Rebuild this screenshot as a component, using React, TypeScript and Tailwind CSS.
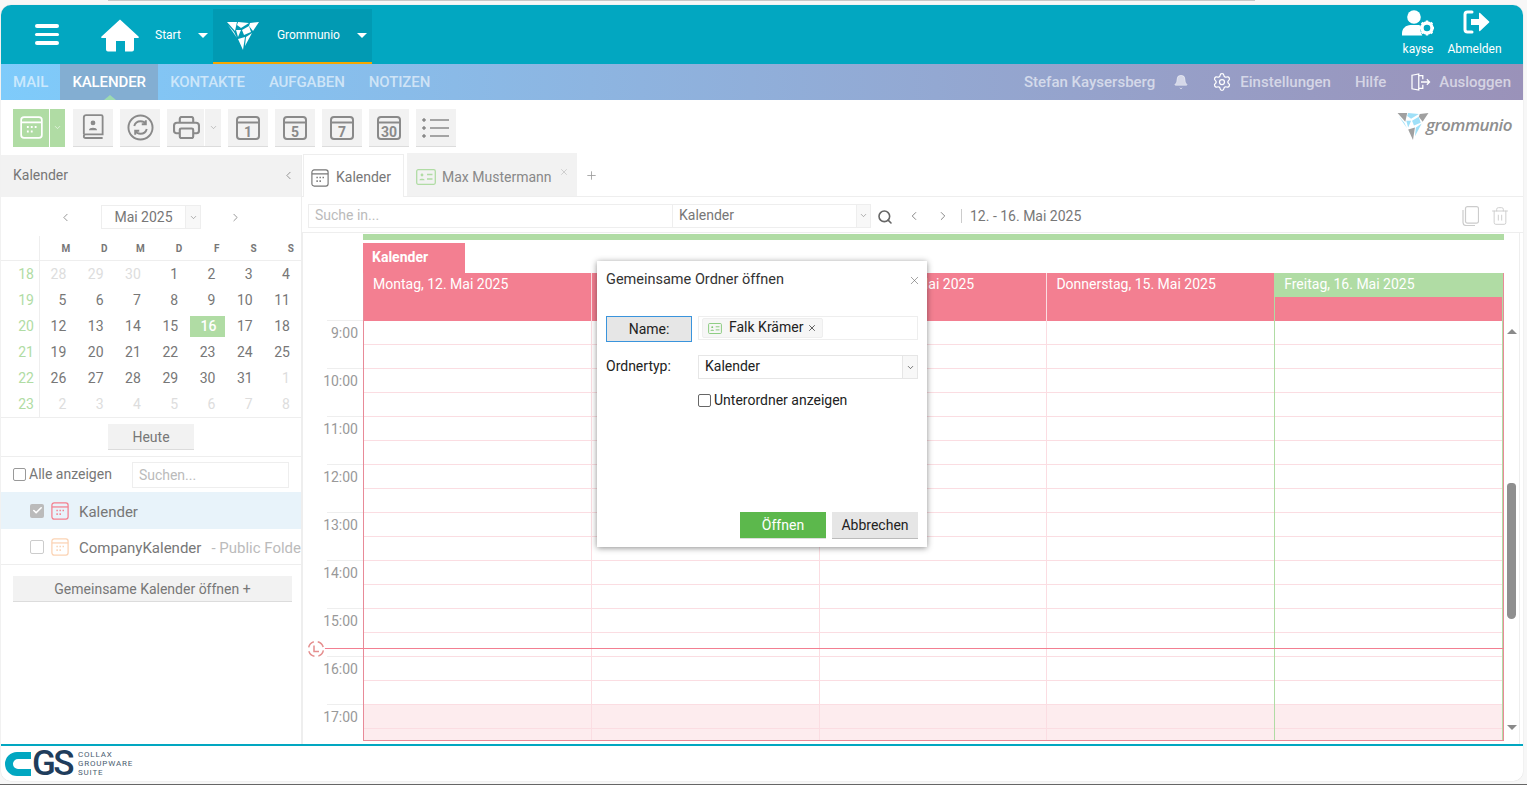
import { Bell, ChevronDown, ChevronLeft, ChevronRight, Plus, Search, Settings, Trash2, X, Check } from "lucide-react";

const NAV_LEFT = ["KONTAKTE", "AUFGABEN", "NOTIZEN"];
const HOURS = ["9:00", "10:00", "11:00", "12:00", "13:00", "14:00", "15:00", "16:00", "17:00"];
const WEEKDAYS = ["M", "D", "M", "D", "F", "S", "S"];
const WEEKS = [
  { nr: 18, days: [28, 29, 30, 1, 2, 3, 4] },
  { nr: 19, days: [5, 6, 7, 8, 9, 10, 11] },
  { nr: 20, days: [12, 13, 14, 15, 16, 17, 18] },
  { nr: 21, days: [19, 20, 21, 22, 23, 24, 25] },
  { nr: 22, days: [26, 27, 28, 29, 30, 31, 1] },
  { nr: 23, days: [2, 3, 4, 5, 6, 7, 8] },
];
const DAYS = ["Montag, 12. Mai 2025", "Dienstag, 13. Mai 2025", "Mittwoch, 14. Mai 2025", "Donnerstag, 15. Mai 2025", "Freitag, 16. Mai 2025"];

function Shards({ a, b, className }: { a: string; b: string; className?: string }) {
  return (
    <svg viewBox="0 0 32 28" className={className}>
      <polygon points="0,0 10,0 8,9" fill={a} />
      <polygon points="11,0 22,1 14,6 10,3" fill={b} />
      <polygon points="23,1 32,0 26,9 22,4" fill={a} />
      <polygon points="1,3 7,10 10,16" fill={b} />
      <polygon points="9,8 14,8 11,15" fill={b} />
      <polygon points="15,8 22,4 24,10 17,13" fill={b} />
      <polygon points="11,17 18,15 16,28" fill={a} />
      <polygon points="19,15 25,11 18,24" fill={b} />
    </svg>
  );
}

function CalIcon({ label, className }: { label: string; className?: string }) {
  return (
    <svg viewBox="0 0 26 26" className={className} fill="none" stroke="#8a8a8a" strokeWidth="2">
      <rect x="2" y="2" width="22" height="22" rx="3" />
      <path d="M2 7.500h22" />
      <text x="13" y="22" textAnchor="middle" fontSize="14" fontWeight="700" fill="#8a8a8a" stroke="none" fontFamily="Roboto, sans-serif">
        {label}
      </text>
    </svg>
  );
}

function GridCal({ color, className, width = 2 }: { color: string; className?: string; width?: number }) {
  return (
    <svg viewBox="0 0 20 20" className={className} fill="none" stroke={color} strokeWidth={width}>
      <rect x="1" y="1" width="18" height="18" rx="2.500" />
      <path d="M1 5.500h18" />
      <path d="M6 9.500h1.600M9.400 9.500H11M12.800 9.500h1.600M6 13.500h1.600M9.400 13.500H11" strokeWidth="1.800" />
    </svg>
  );
}

function ContactCard({ color, className }: { color: string; className?: string }) {
  return (
    <svg viewBox="0 0 20 16" className={className} fill="none" stroke={color} strokeWidth="1.300">
      <rect x="0.700" y="0.700" width="18.600" height="14.600" rx="1.500" />
      <circle cx="6" cy="6" r="1.400" fill={color} stroke="none" />
      <path d="M3.400 11.200c0-1.800 5.200-1.800 5.200 0z" fill={color} stroke="none" />
      <path d="M11 5.500h5.500M11 10h5.500" />
    </svg>
  );
}

function ToolButton({ children, w = "w-[40px]" }: { children: React.ReactNode; w?: string }) {
  return <div className={`${w} h-[38px] bg-[#f2f2f2] border-b border-[#dcdcdc] flex items-center justify-center`}>{children}</div>;
}

function Caret({ className }: { className?: string }) {
  return <span className={`w-0 h-0 border-x-[5px] border-x-transparent border-t-[5px] border-t-white ${className ?? ""}`} />;
}

function Sidebar() {
  return (
    <aside className="w-[301px] shrink-0 flex flex-col border-r border-[#eeeeee] text-[#777777]">
      <div className="h-[42px] bg-[#f2f2f2] flex items-center justify-between pl-3 pr-[6px] pb-[2px] text-[14px]">
        <span>Kalender</span>
        <ChevronLeft size={13} strokeWidth={1.4} />
      </div>

      <div className="h-[39px] flex items-center pl-[58px] pt-[1px]">
        <ChevronLeft size={13} strokeWidth={1.4} />
        <div className="ml-[29px] w-[100px] h-[24px] border border-[#eeeeee] flex text-[14px]">
          <span className="flex-1 text-center leading-[22px]">Mai 2025</span>
          <span className="w-[15px] bg-[#f8f8f8] border-l border-[#eeeeee] flex items-center justify-center">
            <ChevronDown size={9} strokeWidth={1.5} />
          </span>
        </div>
        <ChevronRight size={13} strokeWidth={1.4} className="ml-[28px]" />
      </div>

      <div className="flex h-[25px] border-b border-[#eeeeee]">
        <div className="w-[39px] border-r border-[#eeeeee]" />
        <div className="flex-1 grid grid-cols-7 text-[10px] font-bold leading-[25px] text-right">
          {WEEKDAYS.map((d, i) => (
            <span key={i} className="pr-[7px]">{d}</span>
          ))}
        </div>
      </div>

      <div className="border-b border-[#eeeeee]">
        {WEEKS.map((w, wi) => (
          <div key={w.nr} className="flex h-[26px] text-[14px] leading-[26px]">
            <div className="w-[39px] border-r border-[#eeeeee] text-right pr-[5px] text-[#b0dca4]">{w.nr}</div>
            <div className="flex-1 grid grid-cols-7 text-right">
              {w.days.map((d, i) => {
                const muted = (wi === 0 && i < 3) || (wi === 4 && i === 6) || wi === 5;
                const today = d === 16;
                return (
                  <span key={i} className="pr-[11px] relative">
                    {today ? (
                      <span className="absolute left-[1px] right-[1px] top-[3px] h-[21px] bg-[#b0dca4] text-white pr-[9px] leading-[21px] font-medium">{d}</span>
                    ) : (
                      <span className={muted ? "text-[#dddddd]" : ""}>{d}</span>
                    )}
                  </span>
                );
              })}
            </div>
          </div>
        ))}
      </div>

      <div className="h-[39px] pt-[6px] pl-[107px] border-b border-[#eeeeee]">
        <div className="w-[86px] h-[26px] bg-[#f2f2f2] border-b border-[#dcdcdc] text-center text-[14px] leading-[27px]">Heute</div>
      </div>

      <div className="h-[35px] flex items-center pl-3 text-[14px]">
        <span className="w-[13px] h-[13px] border border-[#999999] rounded-[2px] mr-[3px]" />
        <span>Alle anzeigen</span>
        <div className="ml-[20px] w-[157px] h-[26px] border border-[#eeeeee] pl-[6px] leading-[25px] text-[#bbbbbb]">Suchen...</div>
      </div>

      <div className="h-[37px] bg-[#e8f3fa] flex items-center pl-[29px] text-[15px]">
        <span className="w-[14px] h-[14px] bg-[#bbbbbb] rounded-[2px] flex items-center justify-center">
          <Check size={11} strokeWidth={3.5} color="#ffffff" />
        </span>
        <GridCal color="#f3808f" className="w-[18px] h-[18px] ml-[7px]" width={1.4} />
        <span className="ml-[10px] pt-[3px]">Kalender</span>
      </div>
      <div className="h-[36px] flex items-center pl-[29px] text-[15px] border-b border-[#eeeeee] whitespace-nowrap overflow-hidden">
        <span className="w-[14px] h-[14px] border border-[#cccccc] rounded-[2px] shrink-0" />
        <GridCal color="#fbd3b4" className="w-[18px] h-[18px] ml-[7px] shrink-0" width={1.4} />
        <span className="ml-[10px] pt-[3px]">CompanyKalender</span>
        <span className="ml-[10px] pt-[3px] text-[#bbbbbb]">- Public Folder</span>
      </div>

      <div className="pt-[11px] pl-3 pr-[9px]">
        <div className="h-[26px] bg-[#f2f2f2] border-b border-[#dcdcdc] text-center text-[14px] leading-[27px]">Gemeinsame Kalender öffnen +</div>
      </div>
    </aside>
  );
}

function CalendarArea() {
  return (
    <div className="flex-1 flex flex-col min-w-0 text-[#777777] text-[14px]">
      <div className="h-[42px] flex items-end border-b border-[#eeeeee] pl-[1px] shrink-0">
        <div className="w-[101px] h-[43px] -mb-px bg-white border-x border-t border-[#eeeeee] flex items-center pl-[7px] pt-[3px]">
          <GridCal color="#777777" className="w-[18px] h-[18px]" width={1.3} />
          <span className="ml-[7px]">Kalender</span>
        </div>
        <div className="ml-[3px] w-[170px] h-[43px] bg-[#f2f2f2] flex items-center pl-[9px] pt-[5px] relative text-[#888888]">
          <ContactCard color="#b0dca4" className="w-[20px] h-[16px]" />
          <span className="ml-[6px]">Max Mustermann</span>
          <X size={10} strokeWidth={1.2} className="absolute right-[8px] top-[14px] text-[#aaaaaa]" />
        </div>
        <Plus size={13} strokeWidth={1.5} className="ml-[8px] mb-[14px] text-[#999999]" />
      </div>

      <div className="h-[36px] flex items-center pl-[6px] pt-[2px] border-b border-[#eeeeee] shrink-0">
        <div className="w-[563px] h-[24px] border border-[#eeeeee] flex leading-[20px]">
          <span className="w-[363px] pl-[6px] text-[#bbbbbb]">Suche in...</span>
          <span className="flex-1 border-l border-[#eeeeee] pl-[6px]">Kalender</span>
          <span className="w-[14px] border-l border-[#eeeeee] bg-[#f8f8f8] flex items-center justify-center">
            <ChevronDown size={9} strokeWidth={1.5} />
          </span>
        </div>
        <Search size={16} strokeWidth={2.4} className="ml-[6px] mt-[2px] text-[#666666]" />
        <ChevronLeft size={14} strokeWidth={1.5} className="ml-[14px]" />
        <ChevronRight size={14} strokeWidth={1.5} className="ml-[15px]" />
        <span className="ml-[11px] pl-[8px] border-l border-[#cccccc] leading-[14px]">12. - 16. Mai 2025</span>
        <div className="ml-auto flex items-center gap-[11px] pr-[13px] text-[#cccccc]">
          <svg viewBox="0 0 17 20" className="w-[17px] h-[20px]" fill="none" stroke="#cccccc" strokeWidth="1.200">
            <rect x="3.500" y="0.700" width="13" height="16.500" rx="2" />
            <path d="M1 4v12.500a3 3 0 0 0 3 3h9" />
          </svg>
          <Trash2 size={20} strokeWidth={1.1} />
        </div>
      </div>

      <div className="flex-1 flex min-h-0 relative">
        <div className="w-[61px] shrink-0 pt-[87px] border-l border-[#eeeeee] overflow-hidden">
          {HOURS.map((h) => (
            <div key={h} className="h-[48px] ml-[24px] border-t border-[#eeeeee] flex justify-end pr-[5px] text-[#999999] leading-[24px] text-[14px]">
              <span>{h}</span>
            </div>
          ))}
        </div>

        <div className="w-[1141px] shrink-0 flex flex-col overflow-hidden pb-[3px]">
          <div className="h-[6px] mt-[1px] bg-[#b0dca4] shrink-0" />
          <div className="mt-[3px] h-[30px] w-[102px] bg-[#f37f91] text-white font-bold text-[14px] pl-[9px] leading-[28px] shrink-0">Kalender</div>
          <div className="flex-1 flex border-x border-b border-[#e88a98] min-h-0 overflow-hidden">
            {DAYS.map((d, i) => {
              const today = i === 4;
              return (
                <div key={d} className={`flex-1 min-w-0 flex flex-col ${i > 0 ? (today ? "border-l border-[#b0dca4]" : "border-l border-[#fbdde2]") : ""} ${today ? "border-r border-[#b0dca4]" : ""}`}>
                  <div className="h-[48px] shrink-0 bg-[#f37f91]">
                    <div className={`h-[24px] text-white pl-[9px] leading-[22px] whitespace-nowrap ${today ? "bg-[#b0dca4]" : ""}`}>{d}</div>
                  </div>
                  {Array.from({ length: 18 }).map((_, r) => (
                    <div key={r} className={`h-[24px] shrink-0 border-b border-[#fbdde2] ${r >= 16 ? "bg-[#fdecee]" : ""}`} />
                  ))}
                </div>
              );
            })}
          </div>
        </div>

        <div className="absolute left-[6px] right-[20px] top-[415px] h-px bg-[#f37f91]" />
        <svg viewBox="0 0 18 18" className="absolute left-[5px] top-[407px] w-[18px] h-[18px] bg-white rounded-full" fill="none" stroke="#e58f8f" strokeWidth="1.500">
          <circle cx="9" cy="9" r="7.500" strokeDasharray="7.800 4" strokeDashoffset="-1.500" />
          <path d="M7 5.500v6h5" />
        </svg>

        <div className="w-[15px] shrink-0 ml-[1px] relative border-r border-[#eeeeee]">
          <span className="absolute left-[2px] top-[96px] w-0 h-0 border-x-[5px] border-x-transparent border-b-[5px] border-b-[#8a8a8a]" />
          <div className="absolute left-[2px] top-[250px] w-[9px] h-[136px] rounded-b-[5px] rounded-t-[4px] bg-[#8f8f8f]" />
          <span className="absolute left-[2px] top-[492px] w-0 h-0 border-x-[5px] border-x-transparent border-t-[5px] border-t-[#8a8a8a]" />
        </div>
      </div>
    </div>
  );
}

function ShareDialog() {
  return (
    <div className="absolute left-[596px] top-[256px] w-[330px] h-[286px] bg-white shadow-[0_1px_6px_rgba(0,0,0,0.45)] text-[#222222] text-[14px] px-[9px] flex flex-col">
      <div className="flex items-center justify-between h-[36px] pt-[2px]">
        <span className="text-[14.5px] text-[#333333]">Gemeinsame Ordner öffnen</span>
        <X size={13} strokeWidth={1.1} className="text-[#666666] mr-[-3px]" />
      </div>
      <div className="flex mt-[19px] gap-[6px]">
        <div className="w-[86px] h-[26px] bg-[#e6e6e6] border border-[#3a94dc] text-center leading-[25px]">Name:</div>
        <div className="w-[220px] h-[24px] border border-[#eeeeee] pl-[3px] pt-[1px]">
          <div className="w-[121px] h-[20px] bg-[#f6f6f6] border border-[#eeeeee] rounded-[2px] flex items-center pl-[5px] leading-[15px]">
            <ContactCard color="#7fc773" className="w-[14px] h-[11px]" />
            <span className="ml-[7px] -mt-[1px]">Falk Krämer</span>
            <X size={10} strokeWidth={1.7} className="ml-[4px]" />
          </div>
        </div>
      </div>
      <div className="flex mt-[13px] gap-[6px] items-center">
        <div className="w-[86px] -mt-[2px]">Ordnertyp:</div>
        <div className="w-[220px] h-[24px] border border-[#e6e6e6] flex leading-[21px]">
          <span className="flex-1 pl-[6px]">Kalender</span>
          <span className="w-[15px] bg-[#f8f8f8] border-l border-[#e6e6e6] flex items-center justify-center">
            <ChevronDown size={9} strokeWidth={1.6} />
          </span>
        </div>
      </div>
      <div className="flex items-center ml-[92px] mt-[11px]">
        <span className="w-[13px] h-[13px] border border-[#666666] rounded-[2px] mr-[3px]" />
        <span>Unterordner anzeigen</span>
      </div>
      <div className="mt-auto mb-[8px] flex justify-end gap-[6px]">
        <div className="w-[86px] h-[27px] bg-[#5cb84c] border-b border-[#dddddd] text-white text-center leading-[26px]">Öffnen</div>
        <div className="w-[86px] h-[27px] bg-[#e6e6e6] border-b border-[#bbbbbb] text-center leading-[26px]">Abbrechen</div>
      </div>
    </div>
  );
}

export default function App() {
  return (
    <div className="h-[785px] w-[1527px] overflow-hidden bg-[#f7f7f7] flex flex-col font-['Roboto',sans-serif]">
      <div className="h-px w-[1147px] ml-[108px] bg-[#c8c8c8] shrink-0" />
      <div className="mt-[4px] ml-[1px] w-[1522px] h-[776px] shrink-0 bg-white rounded-[10px] overflow-hidden flex flex-col relative shadow-[0_0_1px_rgba(0,0,0,0.25)]">
        {/* top bar */}
        <header className="h-[59px] shrink-0 bg-[#02a7c1] flex text-white text-[12px]">
          <div className="ml-[34px] mt-[19px] w-[24px] flex flex-col gap-[5px]">
            <span className="h-[3.5px] rounded-sm bg-white" />
            <span className="h-[3.5px] rounded-sm bg-white" />
            <span className="h-[3.5px] rounded-sm bg-white" />
          </div>
          <svg viewBox="0 0 38 33" className="ml-[42px] mt-[14px] w-[38px] h-[33px]" fill="#ffffff">
            <path d="M19 0.500 37.500 17.500c.6.6.2 1.600-.7 1.600H33v11.400a2 2 0 0 1-2 2h-7V22h-9v10.500H7a2 2 0 0 1-2-2V19.100H1.200c-.9 0-1.300-1-.7-1.600z" />
          </svg>
          <span className="ml-[16px] mt-[23px] leading-[15px]">Start</span>
          <Caret className="ml-[17px] mt-[28px]" />
          <div className="ml-[5px] mt-[4px] w-[159px] h-[55px] bg-[#019ab3] border-b-2 border-[#f5a700] flex items-center">
            <Shards a="#ffffff" b="#ffffff" className="ml-[14px] w-[32px] h-[28px]" />
            <span className="ml-[18px] -mt-[2px]">Grommunio</span>
            <Caret className="ml-[17px]" />
          </div>
          <div className="ml-auto flex pr-[21px] pt-[5px] gap-[12px]">
            <div className="w-[34px] flex flex-col items-center">
              <svg viewBox="0 0 32 26" className="w-[32px] h-[26px]" fill="#ffffff">
                <circle cx="12" cy="7" r="6.800" />
                <path d="M0 25.500v-2c0-5 4-8.500 8.500-8.500h7c1.500 0 2.500.3 3.500.8-1.200 2.800-.6 6.500 1.300 9.700z" />
                <circle cx="25" cy="18" r="5" fill="none" stroke="#ffffff" strokeWidth="3.400" />
                <path d="M25 10.500v3M25 22.500v3M17.500 18h3M29.500 18h3M19.700 12.700l2 2M28.300 21.300l2 2M19.700 23.300l2-2M28.300 14.700l2-2" stroke="#ffffff" strokeWidth="2.400" />
              </svg>
              <span className="mt-[6px] leading-[14px]">kayse</span>
            </div>
            <div className="w-[55px] flex flex-col items-center">
              <svg viewBox="0 0 27 24" className="w-[27px] h-[24px] ml-[3px]" fill="#ffffff">
                <path d="M9 2H4.500A2.500 2.500 0 0 0 2 4.500v15A2.500 2.500 0 0 0 4.500 22H9" fill="none" stroke="#ffffff" strokeWidth="3" strokeLinecap="round" />
                <path d="M8 9h8V3.500c0-.6.7-.9 1.100-.5l9 8.400c.4.3.4.9 0 1.200l-9 8.400c-.4.4-1.100.1-1.100-.5V15H8z" />
              </svg>
              <span className="mt-[8px] leading-[14px]">Abmelden</span>
            </div>
          </div>
        </header>

        {/* module nav */}
        <nav className="h-[36px] shrink-0 bg-gradient-to-r from-[#7ecbfb] to-[#9a92b9] flex items-center text-[15px] font-medium text-white/60">
          <span className="ml-3 tracking-[-0.1px]">MAIL</span>
          <div className="ml-[12px] w-[98px] h-full bg-[#83aed2] text-white text-center leading-[36px] relative tracking-[-0.1px]">
            KALENDER
            <span className="absolute left-[44px] bottom-0 w-0 h-0 border-x-[6px] border-x-transparent border-b-[5px] border-b-[#9ddbb0]" />
          </div>
          <div className="ml-3 flex gap-6 tracking-[-0.1px]">
            {NAV_LEFT.map((n) => (
              <span key={n}>{n}</span>
            ))}
          </div>
          <div className="ml-auto flex items-center pr-[12px]">
            <span className="pt-[1px] mr-[1px]">Stefan Kaysersberg</span>
            <Bell size={16} fill="currentColor" strokeWidth={1} className="ml-[17px]" />
            <Settings size={20} strokeWidth={1.5} className="ml-[23px] text-white" />
            <span className="ml-[8px]">Einstellungen</span>
            <span className="ml-6">Hilfe</span>
            <svg viewBox="0 0 22 20" className="ml-[25px] w-[20px] h-[18px]" fill="none" stroke="#ffffff" strokeWidth="1.400">
              <path d="M1 2.500 8.500 1v18L1 17.500zM8.500 3H13v4M8.500 17H13v-4M11 10h9M17.500 7l3 3-3 3" />
            </svg>
            <span className="ml-[8px]">Ausloggen</span>
          </div>
        </nav>

        {/* toolbar */}
        <div className="h-[55px] shrink-0 flex items-center pl-3 relative">
          <div className="w-[52px] h-[38px] bg-[#b0dca4] flex items-center">
            <GridCal color="#ffffff" className="ml-[7px] w-[23px] h-[23px]" width={1.5} />
            <span className="ml-[6px] w-px h-full bg-white" />
            <ChevronDown size={9} color="#ffffff" strokeWidth={1.5} className="ml-[3px]" />
          </div>
          <div className="ml-2 flex gap-[7px]">
            <ToolButton>
              <svg viewBox="0 0 24 28" className="w-[22px] h-[26px]" fill="none" stroke="#8a8a8a" strokeWidth="2">
                <path d="M2 22V3.500A2.500 2.500 0 0 1 4.500 1H21a1.500 1.500 0 0 1 1.500 1.500V22H4a2 2 0 0 0-2 2 2 2 0 0 0 2 2h18.500" />
                <circle cx="12" cy="9.500" r="2.600" fill="#8a8a8a" stroke="none" />
                <path d="M7.500 17.500c0-3.600 9-3.600 9 0z" fill="#8a8a8a" stroke="none" />
              </svg>
            </ToolButton>
            <ToolButton>
              <svg viewBox="0 0 28 28" className="w-[27px] h-[27px]" fill="none" stroke="#8a8a8a" strokeWidth="2">
                <circle cx="14" cy="14" r="12.500" />
                <path d="M7.500 12.500C8.500 9 11 7.500 14 7.500c2.500 0 4.500 1.200 5.500 3M19.500 6.500v4.200h-4.200M20.500 15.500c-1 3.500-3.500 5-6.500 5-2.500 0-4.500-1.200-5.500-3M8.500 21.500v-4.200h4.200" />
              </svg>
            </ToolButton>
            <div className="w-[54px] h-[38px] bg-[#f2f2f2] border-b border-[#dcdcdc] flex items-center">
              <svg viewBox="0 0 28 24" className="ml-[6px] w-[27px] h-[23px]" fill="none" stroke="#8a8a8a" strokeWidth="2.200">
                <path d="M7 7V3a2 2 0 0 1 2-2h10a2 2 0 0 1 2 2v4M7 18H3.500A2.500 2.500 0 0 1 1 15.500V10a3 3 0 0 1 3-3h20a3 3 0 0 1 3 3v5.500a2.500 2.500 0 0 1-2.500 2.500H21" />
                <rect x="7" y="13" width="14" height="10" rx="1.500" />
              </svg>
              <span className="ml-[4px] w-px h-full bg-[#ffffff]" />
              <ChevronDown size={9} color="#999999" strokeWidth={1.5} className="ml-[4px]" />
            </div>
            {["1", "5", "7", "30"].map((l) => (
              <ToolButton key={l}>
                <CalIcon label={l} className="w-[26px] h-[26px] mt-[1px]" />
              </ToolButton>
            ))}
            <ToolButton>
              <svg viewBox="0 0 28 22" className="w-[28px] h-[22px] mt-[1px]" fill="#8a8a8a" stroke="#8a8a8a">
                <circle cx="2" cy="3" r="1.300" />
                <circle cx="2" cy="11" r="1.300" />
                <circle cx="2" cy="19" r="1.300" />
                <path d="M8 3h19M8 11h19M8 19h19" strokeWidth="1.600" />
              </svg>
            </ToolButton>
          </div>
          <div className="ml-auto flex items-center pr-[11px]">
            <Shards a="#a0a0a0" b="#9fe0f8" className="w-[32px] h-[27px] -mt-[2px]" />
            <span className="-ml-[3px] -mt-[5px] text-[17px] font-semibold italic text-[#8f8f8f] font-['Open_Sans',sans-serif] tracking-[-0.5px]">grommunio</span>
          </div>
        </div>

        {/* main */}
        <div className="flex-1 flex min-h-0">
          <Sidebar />
          <CalendarArea />
        </div>

        {/* footer */}
        <footer className="h-[37px] shrink-0 border-t-2 border-[#02a7c1] flex items-center pl-[4px] bg-white">
          <svg viewBox="0 0 26 24" className="w-[26px] h-[24px]">
            <path d="M26 0H12A12 12 0 0 0 12 24H26V17H13A5 5 0 0 1 13 7H26z" fill="#02a7c1" />
          </svg>
          <span className="ml-[1px] pr-[3px] text-[35px] leading-[35px] font-medium text-[#1f3d5c] tracking-[-2.500px]">GS</span>
          <div className="ml-[3px] text-[8px] leading-[9px] tracking-[0.8px] text-[#4a5d70]">
            <div>COLLAX</div>
            <div>GROUPWARE</div>
            <div>SUITE</div>
          </div>
        </footer>

        <ShareDialog />
      </div>
      <div className="mt-[3px] h-px bg-[#666666] shrink-0" />
    </div>
  );
}
